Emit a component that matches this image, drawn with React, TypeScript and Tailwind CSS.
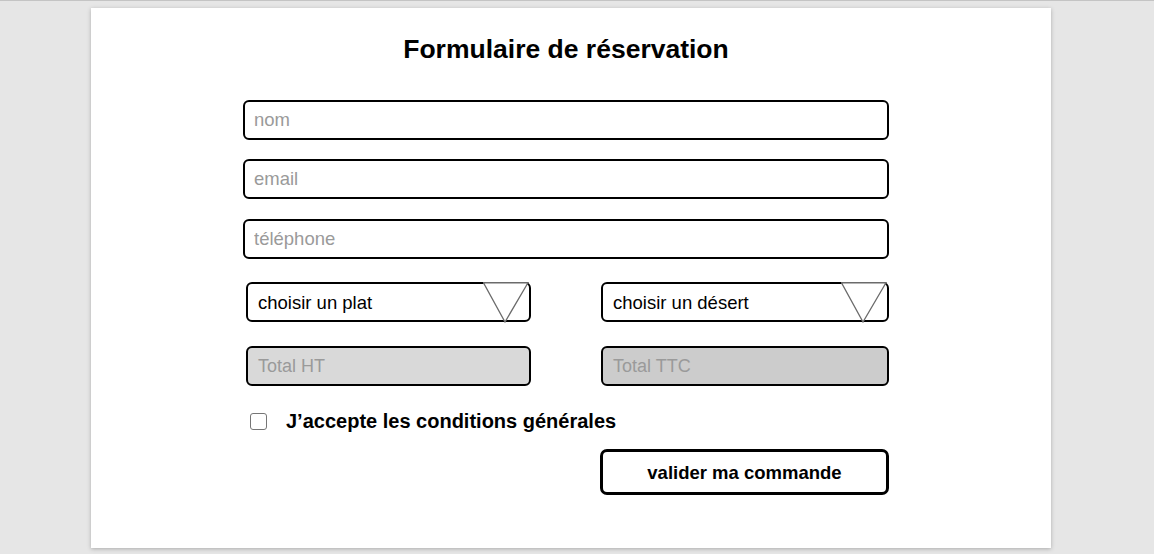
import React from "react";

const font = { fontFamily: '"Liberation Sans", Arial, sans-serif' };

function Triangle() {
  return (
    <svg
      className="absolute top-[-2px] right-0"
      width="46"
      height="41"
      viewBox="0 0 46 41"
    >
      <polygon
        points="0.5,0.75 45,0.75 22,40"
        fill="white"
        stroke="#6b6b6b"
        strokeWidth="1.3"
      />
    </svg>
  );
}

export default function App() {
  return (
    <div
      className="h-[554px] w-full bg-[#e6e6e6] border-t border-[#c4c4c4] pt-[7px] pl-[91px] overflow-hidden"
      style={font}
    >
      <div className="w-[960px] h-[540px] bg-white shadow-[0_1px_4px_rgba(0,0,0,0.25)] pt-[26px] pl-[152px]">
        <div className="w-[646px] flex flex-col">
          <h1 className="text-[26.5px] leading-[30px] font-bold text-black text-center">
            Formulaire de réservation
          </h1>

          <input
            className="mt-[36px] h-[40px] w-full border-2 border-black rounded-[6px] pl-[9px] text-[18.5px] text-black placeholder:text-[#9a9a9a] outline-none"
            placeholder="nom"
          />
          <input
            className="mt-[19px] h-[40px] w-full border-2 border-black rounded-[6px] pl-[9px] text-[18.5px] text-black placeholder:text-[#9a9a9a] outline-none"
            placeholder="email"
          />
          <input
            className="mt-[20px] h-[40px] w-full border-2 border-black rounded-[6px] pl-[9px] text-[18.5px] text-black placeholder:text-[#9a9a9a] outline-none"
            placeholder="téléphone"
          />

          <div className="mt-[23px] flex pl-[3px]">
            <div className="relative w-[285px] h-[40px] border-2 border-black rounded-[6px] flex items-center pl-[10px] pt-[2px] text-[18.5px] text-black">
              choisir un plat
              <Triangle />
            </div>
            <div className="relative ml-auto w-[288px] h-[40px] border-2 border-black rounded-[6px] flex items-center pl-[10px] pt-[2px] text-[18.5px] text-black">
              choisir un désert
              <Triangle />
            </div>
          </div>

          <div className="mt-[24px] flex pl-[3px]">
            <div className="w-[285px] h-[40px] border-2 border-black rounded-[6px] bg-[#d9d9d9] flex items-center pl-[10px] text-[18px] text-[#9a9a9a]">
              Total HT
            </div>
            <div className="ml-auto w-[288px] h-[40px] border-2 border-black rounded-[6px] bg-[#cccccc] flex items-center pl-[10px] text-[18px] text-[#9a9a9a]">
              Total TTC
            </div>
          </div>

          <div className="mt-[23px] h-[24px] flex items-center pl-[7px]">
            <div className="w-[17px] h-[17px] border border-[#767676] rounded-[3px] bg-white" />
            <span className="ml-[19px] text-[20px] font-bold text-black leading-[24px]">
              J’accepte les conditions générales
            </span>
          </div>

          <div className="mt-[16px] flex justify-end">
            <button className="w-[289px] h-[46px] border-[3px] border-black rounded-[7px] bg-white text-[18.5px] font-bold text-black pt-[2px]">
              valider ma commande
            </button>
          </div>
        </div>
      </div>
    </div>
  );
}
